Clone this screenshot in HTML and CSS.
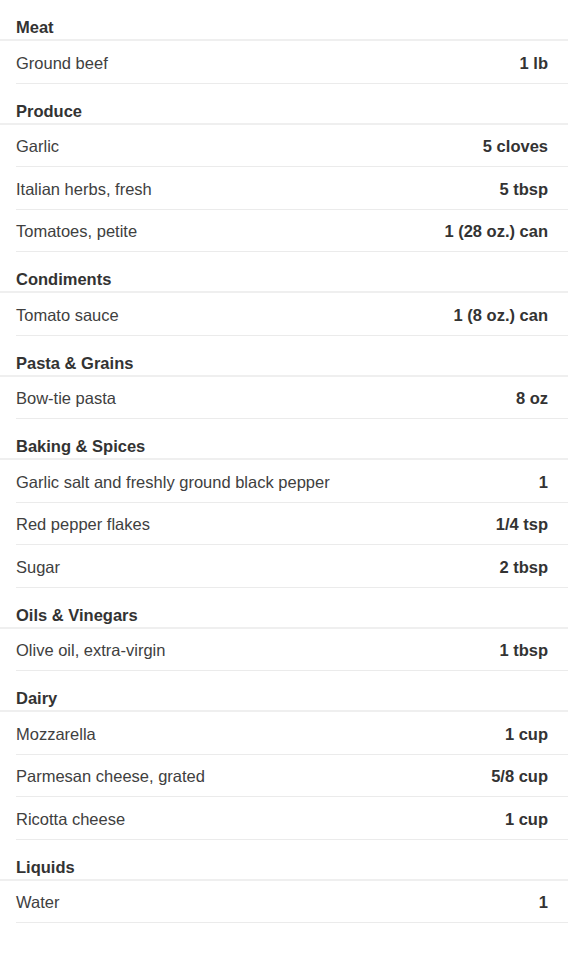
FILE: index.html
```html
<!DOCTYPE html>
<html lang="en">
<head>
  <meta charset="UTF-8" />
  <meta name="viewport" content="width=device-width, initial-scale=1" />
  <title>Ingredients</title>
  <link rel="stylesheet" href="styles.css">
</head>
<body>

  <div class="list">
    <div class="group-title">Meat</div>
    <div class="row"><span class="name">Ground beef</span><span class="qty">1 lb</span></div>

    <div class="group-title">Produce</div>
    <div class="row"><span class="name">Garlic</span><span class="qty">5 cloves</span></div>
    <div class="row"><span class="name">Italian herbs, fresh</span><span class="qty">5 tbsp</span></div>
    <div class="row"><span class="name">Tomatoes, petite</span><span class="qty">1 (28 oz.) can</span></div>

    <div class="group-title">Condiments</div>
    <div class="row"><span class="name">Tomato sauce</span><span class="qty">1 (8 oz.) can</span></div>

    <div class="group-title">Pasta &amp; Grains</div>
    <div class="row"><span class="name">Bow-tie pasta</span><span class="qty">8 oz</span></div>

    <div class="group-title">Baking &amp; Spices</div>
    <div class="row"><span class="name">Garlic salt and freshly ground black pepper</span><span class="qty">1</span></div>
    <div class="row"><span class="name">Red pepper flakes</span><span class="qty">1/4 tsp</span></div>
    <div class="row"><span class="name">Sugar</span><span class="qty">2 tbsp</span></div>

    <div class="group-title">Oils &amp; Vinegars</div>
    <div class="row"><span class="name">Olive oil, extra-virgin</span><span class="qty">1 tbsp</span></div>

    <div class="group-title">Dairy</div>
    <div class="row"><span class="name">Mozzarella</span><span class="qty">1 cup</span></div>
    <div class="row"><span class="name">Parmesan cheese, grated</span><span class="qty">5/8 cup</span></div>
    <div class="row"><span class="name">Ricotta cheese</span><span class="qty">1 cup</span></div>

    <div class="group-title">Liquids</div>
    <div class="row"><span class="name">Water</span><span class="qty">1</span></div>
  </div>

</body>
</html>
```

FILE: styles.css
```css
body {
  font-family: "Liberation Sans", Arial, sans-serif;
  margin: 0; padding: 0;
  background-color: white;
  color: #404040;
}

.list {
  padding-bottom: 30px;
}

.group-title {
  padding: 17px 16px 2px 16px;
  line-height: 20px;
  font-size: 16.5px;
  font-weight: bold;
  color: #333;
  border-bottom: 2px solid #efefef;
}

.row {
  display: flex;
  justify-content: space-between;
  align-items: center;
  margin-left: 16px;
  padding: 11.5px 20px 10px 0;
  line-height: 20px;
  font-size: 16.5px;
  border-bottom: 1px solid #ebebeb;
}

.qty {
  font-weight: bold;
  color: #333;
}
```
